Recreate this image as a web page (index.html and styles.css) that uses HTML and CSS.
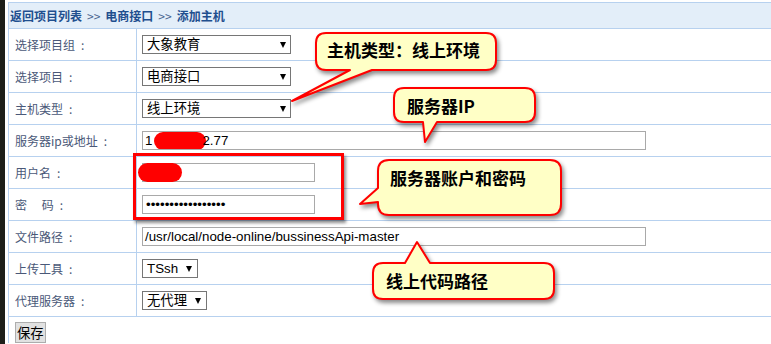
FILE: index.html
```html
<!DOCTYPE html>
<html lang="zh-CN">
<head>
<meta charset="utf-8">
<title>添加主机</title>
<link rel="stylesheet" href="styles.css">
</head>
<body>
<div class="stage">
  <div class="page">
    <div class="form">
      <div class="head"><a class="crumb">返回项目列表</a><span class="sep">&gt;&gt;</span><a class="crumb">电商接口</a><span class="sep">&gt;&gt;</span><span class="crumb">添加主机</span></div>
      <div class="row">
        <div class="label">选择项目组<span class="colon">:</span></div>
        <div class="value"><div class="select wide"><span>大象教育</span><i class="arrow"></i></div></div>
      </div>
      <div class="row">
        <div class="label">选择项目<span class="colon">:</span></div>
        <div class="value"><div class="select wide"><span>电商接口</span><i class="arrow"></i></div></div>
      </div>
      <div class="row">
        <div class="label">主机类型<span class="colon">:</span></div>
        <div class="value"><div class="select wide"><span>线上环境</span><i class="arrow"></i></div></div>
      </div>
      <div class="row">
        <div class="label">服务器ip或地址<span class="colon">:</span></div>
        <div class="value"><div class="input long">1<span class="blob blob-ip"></span>2.77</div></div>
      </div>
      <div class="row">
        <div class="label">用户名<span class="colon">:</span></div>
        <div class="value"><div class="field"><div class="input short"></div><span class="blob blob-user"></span></div></div>
      </div>
      <div class="row">
        <div class="label">密 　码<span class="colon">:</span></div>
        <div class="value"><div class="input short pw">•••••••••••••••••</div></div>
      </div>
      <div class="row">
        <div class="label">文件路径<span class="colon">:</span></div>
        <div class="value"><div class="input long">/usr/local/node-online/bussinessApi-master</div></div>
      </div>
      <div class="row">
        <div class="label">上传工具<span class="colon">:</span></div>
        <div class="value"><div class="select"><span>TSsh</span><i class="arrow"></i></div></div>
      </div>
      <div class="row">
        <div class="label">代理服务器<span class="colon">:</span></div>
        <div class="value"><div class="select"><span>无代理</span><i class="arrow"></i></div></div>
      </div>
      <div class="actions"><button class="btn" type="button">保存</button></div>
    </div>
  </div>

  <div class="redbox"></div>

  <svg class="callouts" width="771" height="344" viewBox="0 0 771 344" aria-hidden="true">
    <path class="bubble" d="M326,33 H486 Q496,33 496,43 V60 Q496,70 486,70 H372 L292,101 L350,70 H326 Q316,70 316,60 V43 Q316,33 326,33 Z"/>
    <path class="bubble" d="M404,88 H525 Q535,88 535,98 V112 Q535,122 525,122 H437 L425,142 L423,122 H404 Q394,122 394,112 V98 Q394,88 404,88 Z"/>
    <path class="bubble" d="M389,160 H550 Q561,160 561,171 V204 Q561,215 550,215 H389 Q378,215 378,204 V202 L360,204 L378,188 V171 Q378,160 389,160 Z"/>
    <path class="bubble" d="M383,263 H405 L417,242 L430,263 H544 Q554,263 554,273 V289 Q554,299 544,299 H383 Q373,299 373,289 V273 Q373,263 383,263 Z"/>
  </svg>

  <div class="note note-type">主机类型：线上环境</div>
  <div class="note note-ip">服务器IP</div>
  <div class="note note-account">服务器账户和密码</div>
  <div class="note note-path">线上代码路径</div>
</div>
</body>
</html>
```

FILE: styles.css
```css
html, body {
  margin: 0;
  padding: 0;
  background: #ffffff;
}

body {
  overflow: hidden;
  font-family: "Noto Sans CJK SC", "Microsoft YaHei", sans-serif;
}

.stage {
  position: relative;
  width: 771px;
  height: 344px;
  overflow: hidden;
}

.page {
  height: 344px;
  box-sizing: border-box;
  border-left: 5px solid #1c1e19;
  padding: 2px 0 0 3px;
}

.form {
  border-top: 1px solid #b7d1ef;
  border-left: 1px solid #b7d1ef;
}

.head {
  height: 25px;
  line-height: 25px;
  padding-left: 1px;
  background: #e3eef9;
  border-bottom: 1px solid #b7d1ef;
  font-size: 12px;
  font-weight: bold;
  color: #1f4f8f;
  white-space: nowrap;
}

.crumb {
  color: #1f4f8f;
  text-decoration: none;
}

.sep {
  font-weight: normal;
  color: #4a6690;
  padding: 0 5px;
}

.row {
  display: flex;
  height: 31px;
  border-bottom: 1px solid #b7d1ef;
}

.label {
  width: 128px;
  box-sizing: border-box;
  border-right: 1px solid #b7d1ef;
  padding-left: 6px;
  display: flex;
  align-items: center;
  font-size: 12px;
  color: #4a5878;
  white-space: pre;
}

.colon {
  margin-left: 6px;
}

.value {
  flex: 1;
  display: flex;
  align-items: center;
  padding-left: 5px;
}

.select {
  display: flex;
  align-items: center;
  height: 19px;
  box-sizing: border-box;
  border: 1px solid #767676;
  background: #ffffff;
  padding: 1px 5px 0 4px;
  font-family: "Liberation Sans", "Noto Sans CJK SC", sans-serif;
  font-size: 13.33px;
  line-height: 16px;
  color: #000000;
  white-space: nowrap;
}

.select.wide {
  width: 149px;
  padding-right: 4px;
}

.arrow {
  display: block;
  width: 0;
  height: 0;
  margin-left: 8px;
  margin-top: -1px;
  border-left: 3.5px solid transparent;
  border-right: 3.5px solid transparent;
  border-top: 6px solid #000000;
}

.select.wide .arrow {
  margin-left: auto;
}

.input {
  display: flex;
  align-items: center;
  height: 19px;
  box-sizing: border-box;
  border: 1px solid #a9a9a9;
  background: #ffffff;
  padding: 0 2px;
  font-family: "Liberation Sans", "Noto Sans CJK SC", sans-serif;
  font-size: 13.33px;
  line-height: 16px;
  color: #000000;
  white-space: nowrap;
  overflow: hidden;
}

.input.long {
  width: 504px;
}

.input.short {
  width: 173px;
}

.input.pw {
  padding-left: 3px;
}

.field {
  position: relative;
}

.blob {
  background: #ff0000;
  border-radius: 10px;
}

.blob-ip {
  display: inline-block;
  width: 52px;
  height: 18px;
  margin: 0 -4px 0 2px;
}

.blob-user {
  position: absolute;
  left: -4px;
  top: 0;
  width: 44px;
  height: 19px;
}

.actions {
  padding: 5px 0 0 6px;
}

.btn {
  display: block;
  height: 21px;
  margin: 0;
  padding: 0 1px;
  border: 1px solid #adadad;
  border-radius: 0;
  background: #e1e1e1;
  font-family: "Noto Sans CJK SC", sans-serif;
  font-size: 13.33px;
  line-height: 18px;
  color: #000000;
}

.redbox {
  position: absolute;
  left: 133px;
  top: 153px;
  width: 211px;
  height: 67px;
  box-sizing: border-box;
  border: 3px solid #ff0000;
  box-shadow: 2px 3px 3px rgba(0, 0, 0, 0.45);
}

.callouts {
  position: absolute;
  left: 0;
  top: 0;
  pointer-events: none;
  filter: drop-shadow(2px 3px 2px rgba(0, 0, 0, 0.45));
}

.bubble {
  fill: #ffffc6;
  stroke: #ff0000;
  stroke-width: 2;
  stroke-linejoin: round;
}

.note {
  position: absolute;
  font-family: "Noto Sans CJK SC", sans-serif;
  font-size: 17px;
  font-weight: bold;
  line-height: 20px;
  color: #000000;
  white-space: nowrap;
}

.note-type {
  left: 327px;
  top: 40px;
}

.note-ip {
  left: 407px;
  top: 96px;
}

.note-account {
  left: 390px;
  top: 168px;
}

.note-path {
  left: 386px;
  top: 271px;
}
```
